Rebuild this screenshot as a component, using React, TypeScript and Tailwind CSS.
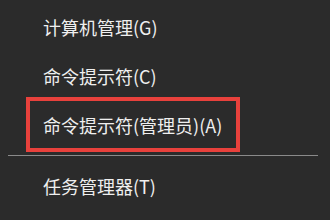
import React from "react";

export default function App() {
  const font = { fontFamily: '"Noto Sans CJK SC", "Noto Sans", sans-serif' };
  return (
    <div
      className="w-[330px] h-[220px] bg-[#2b2b2b] text-[#efefef] text-[18px] leading-none flex flex-col pt-[4px] overflow-hidden"
      style={font}
    >
      <div className="h-[48px] flex items-center pl-[43px] pb-[2px]">计算机管理(G)</div>
      <div className="h-[45px] flex items-center pl-[43px] pt-[3px]">命令提示符(C)</div>
      <div className="ml-[26px] w-[214px] h-[55px] border-4 border-[#e8413c] flex items-center pl-[13px] pt-[1px]">
        命令提示符(管理员)(A)
      </div>
      <div className="ml-[8px] w-[310px] h-px bg-[#8a8a8a] mt-[3px]" />
      <div className="h-[60px] flex items-center pl-[43px]">任务管理器(T)</div>
    </div>
  );
}
